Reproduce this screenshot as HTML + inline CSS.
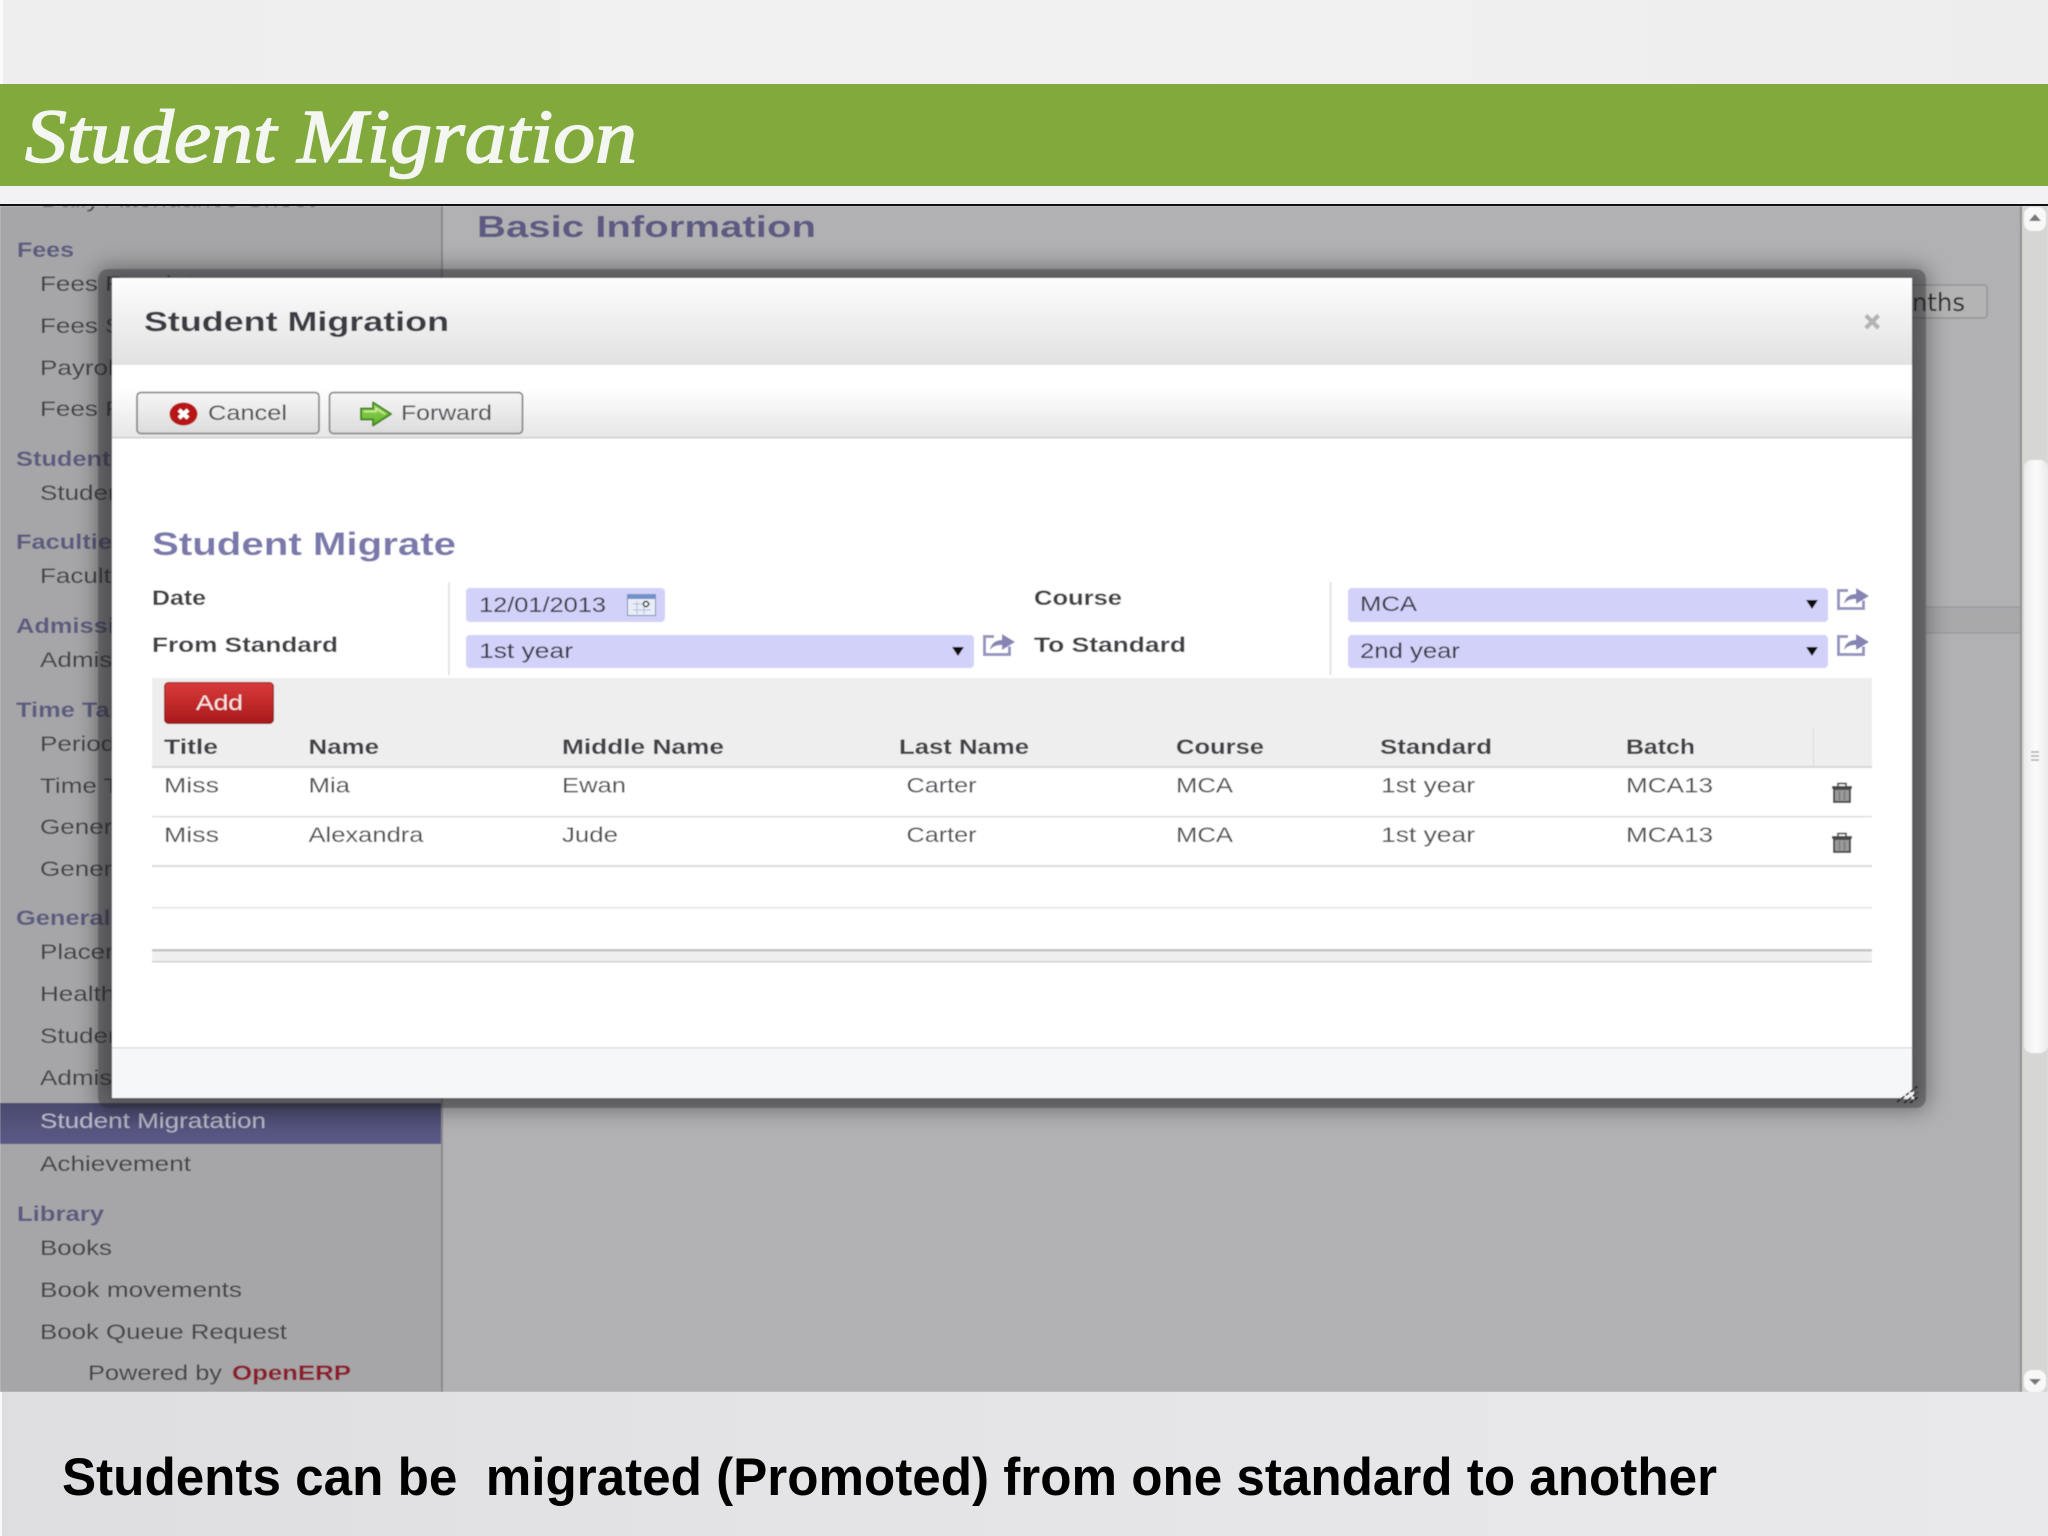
<!DOCTYPE html>
<html><head><meta charset="utf-8"><title>Student Migration</title>
<style>
html,body{margin:0;padding:0;background:#efefef;width:2048px;height:1536px;overflow:hidden}
svg{display:block}
text{font-family:"Liberation Sans",sans-serif;white-space:pre}
.i{font-size:21px;fill:#424246}
.s{font-size:21px;font-weight:bold;fill:#5c5c80}
.h{font-size:21px;font-weight:bold;fill:#404044}
.c{font-size:21px;fill:#505054}
</style></head><body>
<svg xmlns="http://www.w3.org/2000/svg" width="2048" height="1536" viewBox="0 0 2048 1536">
<defs>
<filter id="soft" filterUnits="userSpaceOnUse" x="0" y="0" width="2048" height="1536"><feGaussianBlur stdDeviation="0.45"/></filter>
<filter id="sh" filterUnits="userSpaceOnUse" x="0" y="150" width="2048" height="1100"><feGaussianBlur stdDeviation="11"/></filter>
<pattern id="hatch" width="4" height="4" patternUnits="userSpaceOnUse"><rect width="4" height="4" fill="#acacae"/><rect width="2" height="2" fill="#a4a4a6"/><rect x="2" y="2" width="2" height="2" fill="#a4a4a6"/></pattern>
<linearGradient id="hd" x1="0" y1="0" x2="0" y2="1"><stop offset="0" stop-color="#fdfdfd"/><stop offset="1" stop-color="#e1e1e2"/></linearGradient>
<linearGradient id="tb" x1="0" y1="0" x2="0" y2="1"><stop offset="0" stop-color="#ffffff"/><stop offset="1" stop-color="#e6e6e7"/></linearGradient>
<linearGradient id="btn" x1="0" y1="0" x2="0" y2="1"><stop offset="0" stop-color="#f6f6f6"/><stop offset="1" stop-color="#dcdcdd"/></linearGradient>
<linearGradient id="add" x1="0" y1="0" x2="0" y2="1"><stop offset="0" stop-color="#d93a3a"/><stop offset="1" stop-color="#a81a1c"/></linearGradient>
<linearGradient id="hl" x1="0" y1="0" x2="0" y2="1"><stop offset="0" stop-color="#4a4a6e"/><stop offset="1" stop-color="#5a5a88"/></linearGradient>
<linearGradient id="arw" x1="0" y1="0" x2="0" y2="1"><stop offset="0" stop-color="#a4dc60"/><stop offset="1" stop-color="#5cb028"/></linearGradient>
<linearGradient id="thumb" x1="0" y1="0" x2="1" y2="0"><stop offset="0" stop-color="#ececec"/><stop offset=".5" stop-color="#fbfbfb"/><stop offset="1" stop-color="#ebebeb"/></linearGradient>
<linearGradient id="top" x1="0" y1="0" x2="1" y2="0"><stop offset="0" stop-color="#eeeeee"/><stop offset=".55" stop-color="#f1f1f1"/><stop offset="1" stop-color="#ededed"/></linearGradient>
<linearGradient id="bot" x1="0" y1="0" x2="1" y2="0"><stop offset="0" stop-color="#dedee0"/><stop offset=".4" stop-color="#e4e4e6"/><stop offset="1" stop-color="#e9e8eb"/></linearGradient>
<g id="share">
  <path d="M12 2.500H2.500v18h25v-8" fill="none" stroke="#9695c0" stroke-width="3"/>
  <path d="M8 16c1-7 6-10 12-10V0l13 8-13 8V11c-5 0-9 1-12 5z" fill="#8584b4"/>
</g>
<g id="trash">
  <path d="M6 5V1.500h8V5" fill="none" stroke="#555" stroke-width="1.800"/>
  <rect x="0" y="4" width="20" height="3" fill="#4a4a4a"/>
  <rect x="2" y="7" width="16" height="13" fill="#9a9a9a" stroke="#4a4a4a" stroke-width="2"/>
  <path d="M7.500 9v9M12.500 9v9" stroke="#777" stroke-width="1.400"/>
</g>
<clipPath id="sc"><rect x="0" y="206" width="2048" height="1186"/></clipPath>
</defs>

<rect width="2048" height="1536" fill="#efefef"/>

<g filter="url(#soft)">
<g clip-path="url(#sc)">
  <!-- app background -->
  <rect x="0" y="205" width="2048" height="1187" fill="#b1b0b2"/>
  <rect x="0" y="205" width="441" height="1187" fill="#a6a6a8"/>
  <rect x="441" y="205" width="2" height="1187" fill="#8a8a8e"/>

  <!-- sidebar -->
  <text class="i" x="41" y="207" textLength="274" lengthAdjust="spacingAndGlyphs">Daily Attendance Sheet</text>
  <text class="s" x="17" y="257" textLength="57" lengthAdjust="spacingAndGlyphs">Fees</text>
  <text class="i" transform="translate(40,291) scale(1.24,1)">Fees Receipt</text>
  <text class="i" transform="translate(40,333) scale(1.24,1)">Fees Structure</text>
  <text class="i" transform="translate(40,375) scale(1.24,1)">Payroll</text>
  <text class="i" transform="translate(40,416) scale(1.24,1)">Fees Register</text>
  <text class="s" transform="translate(16,466) scale(1.21,1)">Students</text>
  <text class="i" transform="translate(40,500) scale(1.24,1)">Student Details</text>
  <text class="s" transform="translate(16,549) scale(1.21,1)">Faculties</text>
  <text class="i" transform="translate(40,583) scale(1.24,1)">Faculty Details</text>
  <text class="s" transform="translate(16,633) scale(1.21,1)">Admissions</text>
  <text class="i" transform="translate(40,667) scale(1.24,1)">Admission Form</text>
  <text class="s" transform="translate(16,717) scale(1.21,1)">Time Table</text>
  <text class="i" transform="translate(40,751) scale(1.24,1)">Period</text>
  <text class="i" transform="translate(40,793) scale(1.24,1)">Time Table</text>
  <text class="i" transform="translate(40,834) scale(1.24,1)">Generate</text>
  <text class="i" transform="translate(40,876) scale(1.24,1)">Generate</text>
  <text class="s" transform="translate(16,925) scale(1.21,1)">General</text>
  <text class="i" transform="translate(40,959) scale(1.24,1)">Placement</text>
  <text class="i" transform="translate(40,1001) scale(1.24,1)">Health</text>
  <text class="i" transform="translate(40,1043) scale(1.24,1)">Student History</text>
  <text class="i" transform="translate(40,1085) scale(1.24,1)">Admission Register</text>
  <rect x="0" y="1103" width="441" height="41" fill="url(#hl)"/>
  <text class="i" x="40" y="1128" textLength="226" lengthAdjust="spacingAndGlyphs" style="fill:#b7b7c6">Student Migratation</text>
  <text class="i" x="40" y="1171" textLength="151" lengthAdjust="spacingAndGlyphs">Achievement</text>
  <text class="s" x="17" y="1221" textLength="87" lengthAdjust="spacingAndGlyphs">Library</text>
  <text class="i" x="40" y="1255" textLength="72" lengthAdjust="spacingAndGlyphs">Books</text>
  <text class="i" x="40" y="1297" textLength="202" lengthAdjust="spacingAndGlyphs">Book movements</text>
  <text class="i" x="40" y="1339" textLength="247" lengthAdjust="spacingAndGlyphs">Book Queue Request</text>
  <text class="i" x="88" y="1380" textLength="134" lengthAdjust="spacingAndGlyphs">Powered by</text>
  <text class="i" x="232" y="1380" textLength="119" lengthAdjust="spacingAndGlyphs" style="font-weight:bold;fill:#8c1c2a">OpenERP</text>

  <!-- main -->
  <text x="477" y="237" textLength="339" lengthAdjust="spacingAndGlyphs" style="font-size:31px;font-weight:bold;fill:#5b5a82">Basic Information</text>
  <rect x="1800" y="285" width="187" height="33" rx="3" fill="#b4b4b4" stroke="#949496" stroke-width="1.500"/>
  <text x="1912" y="311" textLength="53" lengthAdjust="spacingAndGlyphs" style="font-family:'DejaVu Sans',sans-serif;font-size:25px;fill:#2c2c30">nths</text>
  <rect x="1926" y="607" width="96" height="26" fill="url(#hatch)"/>
  <path d="M1926 607H2022M1926 633H2022" stroke="#949496" stroke-width="1"/>
  <rect x="2020" y="206" width="2" height="1186" fill="#8f8f91"/>

  <!-- scrollbar -->
  <rect x="2022" y="205" width="26" height="1187" fill="#d6d6d4"/>
  <rect x="2024" y="207" width="22" height="24" rx="8" fill="#f8f8f8"/>
  <path d="M2035 214l6 7h-12z" fill="#777"/>
  <rect x="2024" y="460" width="24" height="593" rx="8" fill="url(#thumb)"/>
  <path d="M2031 752h8M2031 756h8M2031 760h8" stroke="#aaa" stroke-width="1.500"/>
  <rect x="2024" y="1370" width="22" height="22" rx="8" fill="#f8f8f8"/>
  <path d="M2029 1379h12l-6 6z" fill="#777"/>

  <!-- modal shadow and translucent frame -->
  <rect x="96" y="267" width="1832" height="843" rx="10" fill="#000" opacity=".36" filter="url(#sh)"/>
  <rect x="98" y="269" width="1828" height="839" rx="10" fill="#2c2c32" opacity=".38"/>
</g>

<!-- modal body -->
<rect x="112" y="278" width="1800" height="820" fill="#ffffff"/>
<rect x="112" y="278" width="1800" height="87" fill="url(#hd)"/>
<text x="144" y="331" textLength="305" lengthAdjust="spacingAndGlyphs" style="font-size:28px;font-weight:bold;fill:#3b3b42">Student Migration</text>
<text x="1864" y="331" style="font-size:28px;font-weight:bold;fill:#b4b4b4;stroke:#b4b4b4;stroke-width:1.200">×</text>

<rect x="112" y="388" width="1800" height="49" fill="url(#tb)"/>
<rect x="112" y="437" width="1800" height="1.500" fill="#cfcfd0"/>

<rect x="137" y="392.500" width="182" height="41" rx="4" fill="url(#btn)" stroke="#8c8c8e" stroke-width="1.800"/>
<ellipse cx="183.500" cy="414" rx="14" ry="11.500" fill="#b81416"/>
<path d="M179 410l9 8M188 410l-9 8" stroke="#fff" stroke-width="4"/>
<text class="c" x="208" y="420" textLength="79" lengthAdjust="spacingAndGlyphs">Cancel</text>

<rect x="329.500" y="392.500" width="193" height="41" rx="4" fill="url(#btn)" stroke="#8c8c8e" stroke-width="1.800"/>
<path d="M361 408.500h12v-6l18 11.500-18 11.500v-6h-12z" fill="url(#arw)" stroke="#3f8a18" stroke-width="2" stroke-linejoin="round"/>
<path d="M364 411.500h12v-3l9 5.500" fill="none" stroke="#d8f4b0" stroke-width="1.300"/>
<text class="c" x="401" y="420" textLength="91" lengthAdjust="spacingAndGlyphs">Forward</text>

<text x="152" y="555" textLength="304" lengthAdjust="spacingAndGlyphs" style="font-size:32px;font-weight:bold;fill:#7a79ab">Student Migrate</text>

<text class="h" x="152" y="605" textLength="54" lengthAdjust="spacingAndGlyphs">Date</text>
<text class="h" x="152" y="652" textLength="186" lengthAdjust="spacingAndGlyphs">From Standard</text>
<text class="h" x="1034" y="605" textLength="88" lengthAdjust="spacingAndGlyphs">Course</text>
<text class="h" x="1034" y="652" textLength="152" lengthAdjust="spacingAndGlyphs">To Standard</text>
<path d="M449 582V675M1330.500 582V675" stroke="#dcdcdc" stroke-width="1.500"/>

<rect x="466" y="588" width="199" height="34" rx="4" fill="#d1d1f9"/>
<text class="i" x="479" y="612" textLength="127" lengthAdjust="spacingAndGlyphs" style="fill:#3a3a44">12/01/2013</text>
<rect x="627.500" y="594.500" width="28" height="21" fill="#e9edf6" stroke="#7f8fb8"/>
<rect x="628" y="595" width="27" height="4" fill="#6f92cc"/>
<path d="M633 604h18M633 610h18M637 601v13M644 601v13" stroke="#b4bfd8" stroke-width="1"/>
<circle cx="646" cy="604" r="2.500" fill="#fff" stroke="#222" stroke-width="1.500"/>

<rect x="466" y="635" width="508" height="33" rx="4" fill="#d1d1f9"/>
<text class="i" x="479" y="658" textLength="94" lengthAdjust="spacingAndGlyphs" style="fill:#3a3a44">1st year</text>
<path d="M952 647h12l-6 9z" fill="#111"/>
<use href="#share" x="982" y="634"/>

<rect x="1348" y="588" width="480" height="34" rx="4" fill="#d1d1f9"/>
<text class="i" x="1360" y="611" textLength="57" lengthAdjust="spacingAndGlyphs" style="fill:#3a3a44">MCA</text>
<path d="M1806 600h12l-6 9z" fill="#111"/>
<use href="#share" x="1836" y="588"/>

<rect x="1348" y="635" width="480" height="33" rx="4" fill="#d1d1f9"/>
<text class="i" x="1360" y="658" textLength="100" lengthAdjust="spacingAndGlyphs" style="fill:#3a3a44">2nd year</text>
<path d="M1806 647h12l-6 9z" fill="#111"/>
<use href="#share" x="1836" y="634"/>

<!-- table -->
<rect x="152" y="678" width="1720" height="88" fill="#eeeeee"/>
<rect x="152" y="766" width="1720" height="2" fill="#d6d6d6"/>
<rect x="1813" y="728" width="1" height="38" fill="#dcdcdc"/>
<rect x="164.500" y="682.500" width="109" height="41" rx="4" fill="url(#add)" stroke="#8a1416"/>
<text x="196" y="710" textLength="47" lengthAdjust="spacingAndGlyphs" style="font-size:21px;fill:#f8e2e2">Add</text>

<text class="h" x="164" y="754" textLength="54" lengthAdjust="spacingAndGlyphs">Title</text>
<text class="h" x="308.500" y="754" textLength="70.500" lengthAdjust="spacingAndGlyphs">Name</text>
<text class="h" x="562" y="754" textLength="162" lengthAdjust="spacingAndGlyphs">Middle Name</text>
<text class="h" x="899" y="754" textLength="130" lengthAdjust="spacingAndGlyphs">Last Name</text>
<text class="h" x="1176" y="754" textLength="88" lengthAdjust="spacingAndGlyphs">Course</text>
<text class="h" x="1380" y="754" textLength="112" lengthAdjust="spacingAndGlyphs">Standard</text>
<text class="h" x="1626" y="754" textLength="69" lengthAdjust="spacingAndGlyphs">Batch</text>

<text class="c" x="164" y="792.500" textLength="55" lengthAdjust="spacingAndGlyphs">Miss</text>
<text class="c" x="308.500" y="792.500" textLength="41.500" lengthAdjust="spacingAndGlyphs">Mia</text>
<text class="c" x="562" y="792.500" textLength="64" lengthAdjust="spacingAndGlyphs">Ewan</text>
<text class="c" x="906.500" y="792.500" textLength="70" lengthAdjust="spacingAndGlyphs">Carter</text>
<text class="c" x="1176" y="792.500" textLength="57" lengthAdjust="spacingAndGlyphs">MCA</text>
<text class="c" x="1381" y="792.500" textLength="94" lengthAdjust="spacingAndGlyphs">1st year</text>
<text class="c" x="1626" y="792.500" textLength="87" lengthAdjust="spacingAndGlyphs">MCA13</text>
<use href="#trash" x="1832" y="782"/>

<text class="c" x="164" y="842" textLength="55" lengthAdjust="spacingAndGlyphs">Miss</text>
<text class="c" x="308.500" y="842" textLength="115" lengthAdjust="spacingAndGlyphs">Alexandra</text>
<text class="c" x="562" y="842" textLength="56" lengthAdjust="spacingAndGlyphs">Jude</text>
<text class="c" x="906.500" y="842" textLength="70" lengthAdjust="spacingAndGlyphs">Carter</text>
<text class="c" x="1176" y="842" textLength="57" lengthAdjust="spacingAndGlyphs">MCA</text>
<text class="c" x="1381" y="842" textLength="94" lengthAdjust="spacingAndGlyphs">1st year</text>
<text class="c" x="1626" y="842" textLength="87" lengthAdjust="spacingAndGlyphs">MCA13</text>
<use href="#trash" x="1832" y="832"/>

<rect x="152" y="816" width="1720" height="1.500" fill="#dedede"/>
<rect x="152" y="865" width="1720" height="2" fill="#dadada"/>
<rect x="152" y="907" width="1720" height="1.500" fill="#e2e2e2"/>
<rect x="152" y="949" width="1720" height="13" fill="#f0f0f0"/>
<rect x="152" y="949" width="1720" height="2.500" fill="#c4c4c6"/>
<rect x="152" y="961" width="1720" height="1.500" fill="#cdcdcf"/>

<!-- modal footer -->
<rect x="112" y="1047" width="1800" height="51" fill="#f6f7f9"/>
<rect x="112" y="1047" width="1800" height="1.500" fill="#e2e2e4"/>
<path d="M1903 1099l11-8v8z" fill="#f4f4f6"/>
<path d="M1897 1102l21-16M1904 1103l14-11M1910 1103l8-6" stroke="#1c1c1c" stroke-width="1.600" stroke-dasharray="4 1.500"/>
</g>

<!-- slide chrome -->
<rect x="0" y="0" width="2048" height="204" fill="url(#top)"/>
<rect x="0" y="0" width="3" height="84" fill="#fbfbfb"/>
<rect x="0" y="84" width="2048" height="102" fill="#81a93c"/>
<rect x="0" y="186" width="2048" height="18" fill="#f2f1f3"/>
<rect x="0" y="204" width="2048" height="2" fill="#111114"/>
<text x="25" y="162" textLength="612" lengthAdjust="spacingAndGlyphs" style="font-family:'Liberation Serif',serif;font-style:italic;font-size:76px;fill:#f4f6f2;stroke:#f4f6f2;stroke-width:1.500">Student Migration</text>

<rect x="0" y="1392" width="2048" height="144" fill="url(#bot)"/>
<rect x="0" y="1392" width="2" height="144" fill="#f8f8f8"/>
<text x="62" y="1495" textLength="1655" lengthAdjust="spacingAndGlyphs" style="font-size:53px;font-weight:bold;fill:#000">Students can be  migrated (Promoted) from one standard to another</text>
</svg>
</body></html>
